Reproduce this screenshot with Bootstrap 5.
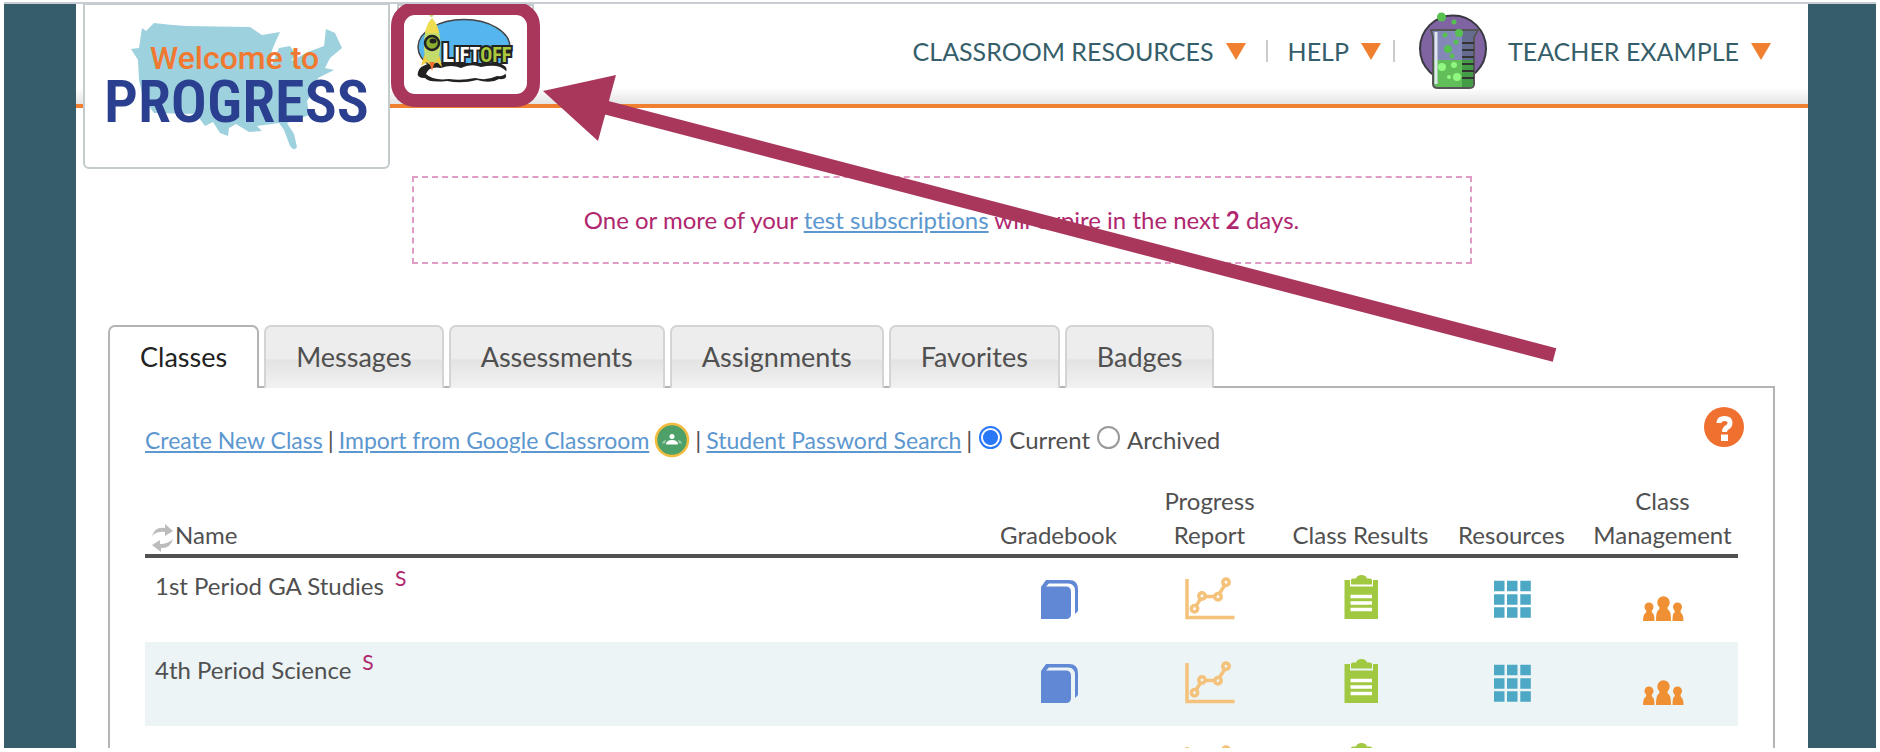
<!DOCTYPE html>
<html lang="en">
<head>
<meta charset="utf-8">
<meta name="viewport" content="width=device-width, initial-scale=1">
<title>Welcome to Progress – Classes</title>
<link href="https://cdn.jsdelivr.net/npm/bootstrap@5.3.0/dist/css/bootstrap.min.css" rel="stylesheet">
<style>
  :root { --teal:#355e6a; --orange:#f08030; --berry:#b0276f; --mark:#a9375b; --rule:#b4b4b4; --link:#5c97cf; }
  body { font-family:Lato,"Noto Sans",sans-serif; font-variant-ligatures:none; font-size:24px; line-height:34px; color:#505050; background:#fff; padding:2px 4px 4px; height:100vh; overflow:hidden; }
  a { color:var(--link); }
  .shell { background:var(--teal); border-top:2px solid #c8ccd4; padding:0 68px 0 72px; height:100%; }
  .site-header { height:104px; border-bottom:4px solid var(--orange); background:linear-gradient(#fff 84%,#e4e4e4); padding:0 37px 0 7px; }
  .brand-box { width:307px; height:165px; margin-bottom:-65px; background:#fff; border:2px solid #c3cbcc; border-top-width:1px; border-radius:0 0 6px 6px; }
  .liftoff { width:137px; height:96px; margin-left:7px; background:#fff; border:2px solid #c3cbcc; }
  .liftoff::after { content:""; position:absolute; inset:-4px -8px -9px; border:13px solid var(--mark); border-radius:24px; z-index:2; }
  .top-nav { height:94px; font-size:25px; }
  .top-nav a { color:var(--teal); text-decoration:none; }
  .tri { margin-left:12px; border:10px solid transparent; border-top:17px solid var(--orange); border-bottom:0; }
  .bar { width:2px; height:22px; background:#ccc; margin:0 20px; }
  .bar-tight { margin:0 24px 0 12px; }
  .avatar { margin-right:20px; }
  .notice { width:1060px; max-width:100%; height:88px; margin:68px auto 61px; border:2px dashed #e19cc6; color:var(--berry); }
  .content { padding:0 33px 0 32px; }
  .nav-tabs { border:0; gap:5px; margin-bottom:-2px; position:relative; z-index:1; }
  .nav-tabs .nav-link { height:63px; margin:0; padding:0 30px 2px; font-size:27px; color:#505050; background:linear-gradient(#ededed 52%,#e3e3e3 54%,#f2f2f2); border:2px solid #d4d4d4; border-bottom:0; border-radius:7px 7px 0 0; }
  .nav-tabs .nav-link.active { color:#222; background:#fff; border-color:var(--rule); border-bottom:0; }
  .panel { border:2px solid var(--rule); padding:19px 35px 0; height:420px; }
  .tools { height:54px; padding-top:12px; margin-bottom:23px; gap:5px; }
  .tools a { font-size:23px; }
  .tools .form-check-input { width:23px; height:23px; margin:0 2px 6px; border:2px solid #999; }
  .tools .form-check-input:checked { background:radial-gradient(#2878f8 0 7px,#fff 8px); border-color:#2878f8; }
  .help-btn { margin:-12px -6px 0 0; width:40px; height:40px; }
  .class-table { --bs-table-bg:transparent; color:inherit; table-layout:fixed; border-collapse:separate; border-spacing:0; }
  .class-table th { font-weight:400; padding:0 0 2px; vertical-align:bottom; border-bottom:4px solid #505252; text-align:center; width:151px; }
  .class-table th:first-child { width:auto; text-align:left; padding-left:6px; }
  .class-table td { height:84px; padding:17px 0 0; border:0; text-align:center; vertical-align:top; line-height:0; }
  .class-table td:first-child { text-align:left; padding:11px 0 0 10px; line-height:34px; }
  .class-table tr:nth-child(even) td { background:#ecf4f6; }
  .class-table .sup { color:var(--berry); font-size:21px; margin-left:11px; vertical-align:9px; line-height:0; }
  .pointer { left:536px; top:56px; z-index:3; pointer-events:none; }
</style>
</head>
<body>
<svg width="0" height="0" class="position-absolute" aria-hidden="true">
  <symbol id="i-book" viewBox="0 0 56 48"><path fill="#6088d4" d="M10 12 15 5H38Q47 5 47 14V36L44 39V16Q44 8.500 37 8.500H18L15 11.500H35Q40 11.500 40 17V39Q40 44 35 44H10Z"/></symbol>
  <symbol id="i-chart" viewBox="0 0 56 48"><g fill="none" stroke="#f4c27a" stroke-width="3.500"><path d="M5 4V42.500H52.500M14 31 18.500 24M23 21.500H33M37.500 18.500 42.500 10.500" /><circle cx="12.500" cy="33.700" r="3.200"/><circle cx="20" cy="21" r="3.200"/><circle cx="36" cy="21.700" r="3.200"/><circle cx="44" cy="7.300" r="3.200"/></g></symbol>
  <symbol id="i-clip" viewBox="0 0 56 48"><path fill="#a0c840" d="M11.500 5H17V11.500H40V5H45V44H11.500Z"/><path fill="#a0c840" d="M18 5Q18 3.500 20 3.500H23Q24 0 28.500 0T34 3.500H37Q39 3.500 39 5V9.500H18Z"/><path stroke="#fff" stroke-width="3.300" d="M17.500 21.500H39M17.500 28H39M17.500 34.500H39"/></symbol>
  <symbol id="i-grid" viewBox="0 0 56 48"><path stroke="#4ca8c4" stroke-width="10.500" d="M10 11H20.500M23 11H33.500M36.300 11H46.800M10 24.500H20.500M23 24.500H33.500M36.300 24.500H46.800M10 37.500H20.500M23 37.500H33.500M36.300 37.500H46.800"/></symbol>
  <symbol id="i-people" viewBox="0 0 56 48"><g fill="#f09034"><circle cx="28.500" cy="27.500" r="6.200"/><path d="M24 30H33Q31.500 34 34 35.500 36 37 36 46H21Q21 37 23 35.500 25.500 34 24 30Z"/><circle cx="14" cy="32" r="4.500"/><path d="M11 34H17Q16 37 18 38.500 19.500 40 19.500 46H8Q8 40 10 38.500 12 37 11 34Z"/><circle cx="42.500" cy="32" r="4.500"/><path d="M39.500 34H45.500Q45 37 46.500 38.500 48.500 40 48.500 46H37.500Q37.500 40 38.500 38.500 40.500 37 39.500 34Z"/></g></symbol>
</svg>

<div class="shell position-relative">
  <div class="bg-white h-100 overflow-hidden">
    <header class="site-header d-flex align-items-start">
      <a href="#" class="brand-box flex-shrink-0 d-block position-relative" aria-label="Welcome to Progress">
        <svg width="303" height="160" viewBox="85 5 303 160" class="d-block">
          <path fill="#9dd1de" d="M142 28 146 31 154 23Q170 25 186 26L250 27 262 35 280 32 275 43 269 58 271 67 279 48 290 46 296 54 291 61 308 52 324 46 326 29 335 33 342 48 330 58 325 68 334 70 318 78 314 90 307 101 309 115Q297 120 287 123L294 134 297 147Q294 152 290 146L284 130 279 123 257 126 262 131 249 132 236 124 229 128 228 136 220 133 213 122 205 126 196 114 154 113 143 98 139 80 138 60 131 49 139 48Z"/>
          <text x="150" y="69" font-family="Roboto,sans-serif" font-weight="500" font-size="32" fill="#f07830">Welcome to</text>
          <text x="104" y="122" font-family="'Roboto Condensed',Roboto,sans-serif" font-weight="600" font-size="60" fill="#2a3f8f">PROGRESS</text>
        </svg>
      </a>
      <a href="#" class="liftoff flex-shrink-0 d-block position-relative" aria-label="Liftoff">
        <svg width="110" height="80" viewBox="0 0 110 80" class="d-block mt-1 ms-2">
          <ellipse cx="57" cy="37" rx="46" ry="27.500" fill="#55b5ee" stroke="#444" stroke-width="1.500"/>
          <path d="M11 62Q12 56 24 53H92Q103 57 98 63 102 70 92 69 84 74 70 70 55 74 40 71 22 73 18 68 9 68 11 62Z" fill="#222"/>
          <path d="M19 64Q22 56 34 58 44 54 54 58 64 53 74 57 92 53 99 61 99 67 90 66 80 71 68 68 54 71 42 69 26 71 19 64Z" fill="#fff"/>
          <path d="M19 40 14 56 20 52 24 56 30 52 35 57 31 40Z" fill="#f0d040"/>
          <path d="M22 51H28L25 61Z" fill="#f07030"/>
          <path d="M25 8Q35 20 33 38 33 47 28 52H22Q17 47 17 38 16 20 25 8Z" fill="#c4dc6c"/>
          <path d="M25 8Q31 15 32 23H18Q19 15 25 8Z" fill="#f0dc50"/>
          <circle cx="24.500" cy="5" r="2" fill="#c4dc6c"/>
          <circle cx="25" cy="33" r="7" fill="#8cae30" stroke="#222" stroke-width="2.500"/><ellipse cx="26" cy="31" rx="3.500" ry="2.500" fill="#222"/>
          <text x="35" y="52" font-family="'Roboto Condensed',Roboto,sans-serif" font-weight="700" font-size="20" fill="#fff" stroke="#222" stroke-width="4" paint-order="stroke"><tspan font-size="26">L</tspan>IFT<tspan fill="#aac83c">OFF</tspan></text>
        </svg>
      </a>
      <nav class="top-nav ms-auto d-flex align-items-center" aria-label="Account">
        <a href="#" class="d-flex align-items-center">CLASSROOM RESOURCES<span class="tri"></span></a>
        <span class="bar"></span>
        <a href="#" class="d-flex align-items-center">HELP<span class="tri"></span></a>
        <span class="bar bar-tight"></span>
        <a href="#" class="d-flex align-items-center">
          <svg width="69" height="80" viewBox="18 11 69 80" class="avatar" aria-hidden="true">
            <circle cx="52" cy="48.500" r="33" fill="#8064a2" stroke="#383840" stroke-width="2"/>
            <path d="M30 30H77L73 37V84Q73 88 68 88H37Q32 88 32 84V37Z" fill="#8488b8" stroke="#555" stroke-width="2"/>
            <path d="M61 31H75L72 37V60H61Z" fill="#666c90"/>
            <path d="M33 60H72V83Q72 87 68 87H37Q33 87 33 83Z" fill="#62be58"/><path d="M61 60H72V83Q72 87 68 87H61Z" fill="#459c46"/>
            <path d="M35 32V84" stroke="#dfe6ee" stroke-width="3"/>
            <path d="M61 43H73M61 50H73M61 57H73M61 64H73M61 71H73M61 78H73" stroke="#333" stroke-width="2"/>
            <g fill="#58c050"><circle cx="40.500" cy="17" r="4.500"/><circle cx="53" cy="22" r="2.500"/><circle cx="44" cy="35" r="2.500"/><circle cx="58" cy="33" r="4"/><circle cx="55" cy="42" r="2.500"/><circle cx="47" cy="49" r="4"/><circle cx="51" cy="56" r="2.500"/></g>
            <g fill="#90f880"><circle cx="41" cy="67" r="4"/><circle cx="53" cy="65" r="3"/><circle cx="56" cy="77" r="4"/><circle cx="48" cy="77" r="2"/></g>
          </svg>TEACHER EXAMPLE<span class="tri"></span></a>
      </nav>
    </header>

    <main class="content">
      <div class="notice d-flex align-items-center justify-content-center" role="alert"><p class="m-0">One or more of your <a href="#">test subscriptions</a> will expire in the next <strong>2</strong> days.</p></div>

      <ul class="nav nav-tabs" role="tablist">
        <li class="nav-item"><button class="nav-link active" type="button" role="tab" aria-selected="true">Classes</button></li>
        <li class="nav-item"><button class="nav-link" type="button" role="tab">Messages</button></li>
        <li class="nav-item"><button class="nav-link" type="button" role="tab">Assessments</button></li>
        <li class="nav-item"><button class="nav-link" type="button" role="tab">Assignments</button></li>
        <li class="nav-item"><button class="nav-link" type="button" role="tab">Favorites</button></li>
        <li class="nav-item"><button class="nav-link" type="button" role="tab">Badges</button></li>
      </ul>

      <section class="panel">
        <div class="tools d-flex align-items-center">
          <a href="#">Create New Class</a><span>|</span>
          <a href="#">Import from Google Classroom</a>
          <svg width="36" height="36" viewBox="0 0 36 36" aria-hidden="true"><circle cx="18" cy="18" r="16" fill="#4ca068" stroke="#f4bc3c" stroke-width="2.500"/><circle cx="18" cy="14.500" r="2.500" fill="#fff"/><path d="M12 22.500Q12 18 18 18T24 22.500Z" fill="#fff"/><path d="M8 21.500Q9 18 12 18L11 21.500ZM28 21.500Q27 18 24 18L25 21.500Z" fill="#9ccbac"/></svg>
          <span>|</span>
          <a href="#">Student Password Search</a><span>|</span>
          <input class="form-check-input" type="radio" name="status" id="current" checked><label for="current">Current</label>
          <input class="form-check-input" type="radio" name="status" id="archived"><label for="archived">Archived</label>
          <button type="button" class="help-btn btn p-0 border-0 ms-auto align-self-start d-flex" aria-label="Help"><svg width="40" height="40" viewBox="0 0 40 40"><circle cx="20" cy="20" r="20" fill="#f07030"/><path d="M15 16Q15 11.500 20.500 11.500T26 16Q26 19 23 20.500 20.500 22 20.500 25" fill="none" stroke="#fff" stroke-width="5"/><path d="M17 27.500H24V34H17Z" fill="#fff"/></svg></button>
        </div>

        <table class="table class-table mb-0">
          <thead>
            <tr>
              <th scope="col"><svg width="24" height="28" viewBox="0 0 24 28" aria-hidden="true"><path d="M1 12Q4 2 14 4V0L22 7 14 12V8Q6 7 1 12ZM22 15Q19 25 10 24V28L1 21 9 16V20Q17 20 22 15Z" fill="#bcbcbc"/></svg>Name</th>
              <th scope="col">Gradebook</th>
              <th scope="col">Progress<br>Report</th>
              <th scope="col">Class Results</th>
              <th scope="col">Resources</th>
              <th scope="col">Class<br>Management</th>
            </tr>
          </thead>
          <tbody>
            <tr>
              <td>1st Period GA Studies<span class="sup">S</span></td>
              <td><svg width="56" height="48"><use href="#i-book"/></svg></td>
              <td><svg width="56" height="48"><use href="#i-chart"/></svg></td>
              <td><svg width="56" height="48"><use href="#i-clip"/></svg></td>
              <td><svg width="56" height="48"><use href="#i-grid"/></svg></td>
              <td><svg width="56" height="48"><use href="#i-people"/></svg></td>
            </tr>
            <tr>
              <td>4th Period Science<span class="sup">S</span></td>
              <td><svg width="56" height="48"><use href="#i-book"/></svg></td>
              <td><svg width="56" height="48"><use href="#i-chart"/></svg></td>
              <td><svg width="56" height="48"><use href="#i-clip"/></svg></td>
              <td><svg width="56" height="48"><use href="#i-grid"/></svg></td>
              <td><svg width="56" height="48"><use href="#i-people"/></svg></td>
            </tr>
            <tr>
              <td></td>
              <td><svg width="56" height="48"><use href="#i-book"/></svg></td>
              <td><svg width="56" height="48"><use href="#i-chart"/></svg></td>
              <td><svg width="56" height="48"><use href="#i-clip"/></svg></td>
              <td><svg width="56" height="48"><use href="#i-grid"/></svg></td>
              <td><svg width="56" height="48"><use href="#i-people"/></svg></td>
            </tr>
          </tbody>
        </table>
      </section>
    </main>
  </div>

  <!-- callout arrow over the page, pointing at the Liftoff tab -->
  <svg class="pointer position-absolute" width="1020" height="310" viewBox="540 60 1020 310" aria-hidden="true">
    <path d="M543 91 616 75 598 141Z" fill="#a9375b"/><path d="M600 106 1554.500 355" stroke="#a9375b" stroke-width="14"/>
  </svg>
</div>
<script src="https://cdn.jsdelivr.net/npm/bootstrap@5.3.0/dist/js/bootstrap.bundle.min.js"></script>
</body>
</html>
